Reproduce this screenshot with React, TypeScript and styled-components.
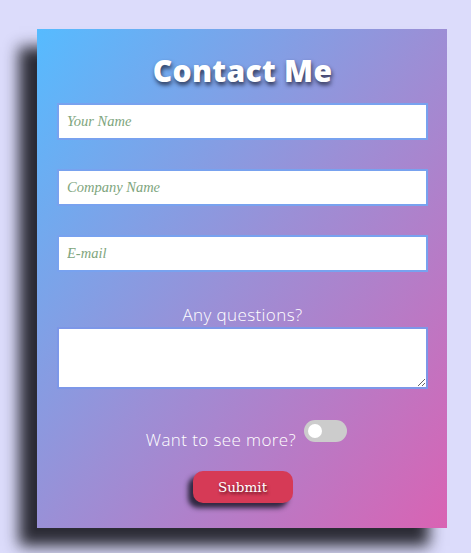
import styled, { createGlobalStyle } from "styled-components";

const GlobalStyle = createGlobalStyle`
  html, body {
    margin: 0;
    padding: 0;
    background: #dcdcfb;
  }
`;

const Page = styled.div`
  width: 471px;
  height: 553px;
  padding: 29px 0 0 37px;
  box-sizing: border-box;
`;

const Card = styled.form`
  width: 410px;
  height: 499px;
  box-sizing: border-box;
  padding: 24px 19px 0 20px;
  background: linear-gradient(128deg, #56bbff 0%, #9b8fd6 50%, #d963b3 100%);
  box-shadow: -18px 18px 14px rgba(34, 34, 42, 0.95);
  display: flex;
  flex-direction: column;
  align-items: center;
`;

const Title = styled.h1`
  margin: 0 0 14px;
  font-family: "Open Sans", sans-serif;
  font-weight: 800;
  font-size: 30px;
  line-height: 36px;
  color: #fff;
  letter-spacing: 0.3px;
  text-shadow: 1px 3px 4px rgba(20, 20, 40, 0.75);
`;

const Input = styled.input`
  width: 371px;
  height: 37px;
  box-sizing: border-box;
  margin-bottom: 29px;
  border: 2px solid #78a2ef;
  padding: 0 8px;
  font-family: "Liberation Serif", serif;
  font-style: italic;
  font-size: 14.5px;
  outline: none;
  background: #fff;

  &::placeholder {
    color: #7ea57d;
  }
`;

const Label = styled.label`
  font-family: "Open Sans", sans-serif;
  font-weight: 300;
  font-size: 17px;
  letter-spacing: 0.4px;
  color: #fff;
  line-height: 20px;
`;

const QuestionLabel = styled(Label)`
  margin-top: 4px;
  margin-bottom: 2px;
`;

const TextArea = styled.textarea`
  width: 371px;
  height: 62px;
  box-sizing: border-box;
  border: 2px solid #7d97e8;
  resize: both;
  outline: none;
  background: #fff;
`;

const ToggleRow = styled.div`
  display: flex;
  align-items: flex-start;
  gap: 8px;
  margin-top: 31px;
  padding-left: 8px;
`;

const ToggleLabel = styled(Label)`
  margin-top: 10px;
`;

const Switch = styled.span`
  width: 43px;
  height: 22px;
  border-radius: 11px;
  background: #cccccc;
  display: flex;
  align-items: center;
  padding-left: 4px;
  box-sizing: border-box;

  &::before {
    content: "";
    width: 14px;
    height: 14px;
    border-radius: 50%;
    background: #fff;
  }
`;

const SubmitButton = styled.button`
  margin-top: 21px;
  width: 100px;
  height: 32px;
  border: none;
  border-radius: 10px;
  background: #d63a56;
  color: #fff;
  font-family: "DejaVu Serif", serif;
  font-size: 13.5px;
  text-shadow: 1px 2px 3px rgba(60, 10, 20, 0.8);
  box-shadow: -5px 5px 5px rgba(34, 30, 50, 0.9);
  cursor: pointer;
`;

export default function App() {
  return (
    <>
      <GlobalStyle />
      <Page>
        <Card onSubmit={(e) => e.preventDefault()}>
          <Title>Contact Me</Title>
          <Input type="text" placeholder="Your Name" />
          <Input type="text" placeholder="Company Name" />
          <Input type="email" placeholder="E-mail" />
          <QuestionLabel>Any questions?</QuestionLabel>
          <TextArea />
          <ToggleRow>
            <ToggleLabel>Want to see more?</ToggleLabel>
            <Switch />
          </ToggleRow>
          <SubmitButton type="submit">Submit</SubmitButton>
        </Card>
      </Page>
    </>
  );
}
